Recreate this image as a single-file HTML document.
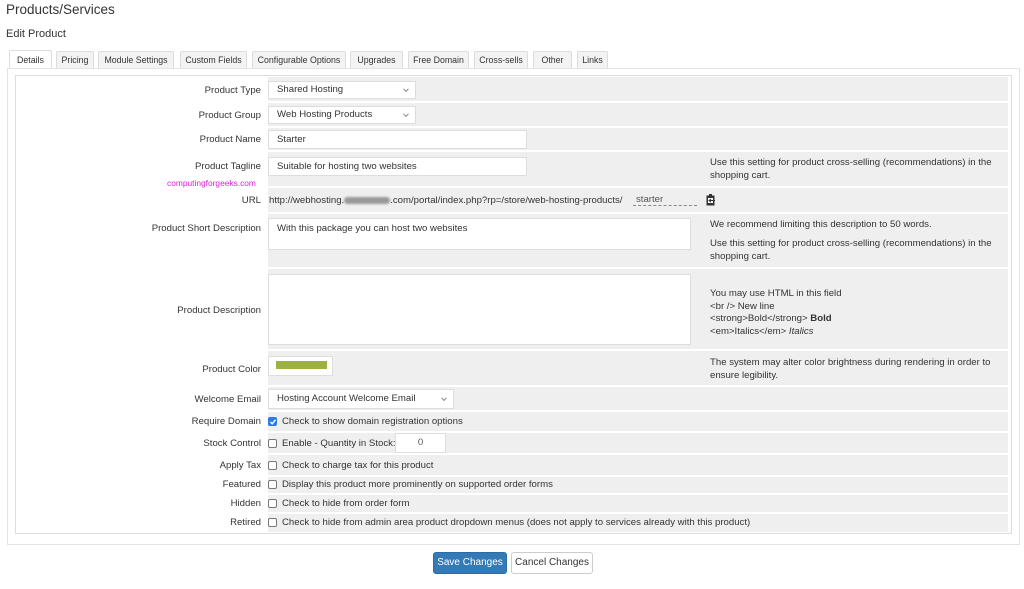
<!DOCTYPE html>
<html><head><meta charset="utf-8"><style>
*{margin:0;padding:0;box-sizing:border-box}
body{width:1024px;height:589px;background:#fff;font-family:"Liberation Sans",sans-serif;color:#333;position:relative;overflow:hidden;font-size:9.6px}
.a{position:absolute;white-space:nowrap}
h1{position:absolute;left:6px;top:2px;font-size:13.5px;font-weight:normal;color:#333}
h2{position:absolute;left:6px;top:28px;font-size:11px;font-weight:normal;color:#333}
.tab{position:absolute;top:51px;height:18px;border:1px solid #ddd;border-bottom:none;background:#f3f3f3;font-size:8.8px;line-height:17px;text-align:center;color:#333;border-radius:2px 2px 0 0;white-space:nowrap}
.tab.on{background:#fff;height:19px;top:50px;line-height:19px}
.panel{position:absolute;left:7px;top:68px;width:1013px;height:477px;border:1px solid #e4e4e4;background:#fff}
.tbl{position:absolute;left:15px;top:75px;width:997px;height:459px;border:1px solid #ddd;background:#fff}
.row{position:absolute;left:268px;width:740px;background:#efefef}
.lab{position:absolute;right:763px;font-size:9.6px;color:#333;text-align:right;white-space:nowrap}
.inp{position:absolute;background:#fff;border:1px solid #ddd;font-size:9.6px;padding-left:8px;color:#333;white-space:nowrap}
.sel::after{content:"";position:absolute;right:7px;top:50%;width:3px;height:3px;border-right:1px solid #888;border-bottom:1px solid #888;transform:translateY(-70%) rotate(45deg)}
.help{position:absolute;left:710px;font-size:9.6px;color:#333;line-height:12.5px;white-space:nowrap}
.cb{position:absolute;left:268px;width:9px;height:9px;border:1px solid #777;border-radius:2px;background:#fff}
.ct{position:absolute;left:282px;font-size:9.6px;color:#333;white-space:nowrap}
.btn{position:absolute;top:552px;height:22px;font-size:10px;line-height:20px;text-align:center;border-radius:3px;white-space:nowrap}
</style></head><body>
<h1>Products/Services</h1>
<h2>Edit Product</h2>
<div class="tab on" style="left:9px;width:43px">Details</div>
<div class="tab" style="left:56px;width:38px">Pricing</div>
<div class="tab" style="left:98px;width:76px">Module Settings</div>
<div class="tab" style="left:180px;width:67px">Custom Fields</div>
<div class="tab" style="left:252px;width:94px">Configurable Options</div>
<div class="tab" style="left:350px;width:53px">Upgrades</div>
<div class="tab" style="left:408px;width:61px">Free Domain</div>
<div class="tab" style="left:474px;width:54px">Cross-sells</div>
<div class="tab" style="left:533px;width:39px">Other</div>
<div class="tab" style="left:577px;width:31px">Links</div>
<div class="panel"></div>
<div class="tbl"></div>

<div class="row" style="top:77px;height:24px"></div>
<div class="row" style="top:103px;height:23px"></div>
<div class="row" style="top:128px;height:22px"></div>
<div class="row" style="top:152px;height:34px"></div>
<div class="row" style="top:188px;height:24px"></div>
<div class="row" style="top:214px;height:53px"></div>
<div class="row" style="top:269px;height:80px"></div>
<div class="row" style="top:351px;height:34px"></div>
<div class="row" style="top:387px;height:23px"></div>
<div class="row" style="top:412px;height:19px"></div>
<div class="row" style="top:433px;height:20px"></div>
<div class="row" style="top:455px;height:20px"></div>
<div class="row" style="top:477px;height:16px"></div>
<div class="row" style="top:495px;height:17px"></div>
<div class="row" style="top:514px;height:18px"></div>

<div class="lab" style="top:85px">Product Type</div>
<div class="inp sel" style="left:268px;top:81px;width:148px;height:18px;line-height:16px">Shared Hosting</div>
<div class="lab" style="top:110px">Product Group</div>
<div class="inp sel" style="left:268px;top:106px;width:148px;height:18px;line-height:16px">Web Hosting Products</div>
<div class="lab" style="top:134px">Product Name</div>
<div class="inp" style="left:268px;top:130px;width:259px;height:19px;line-height:17px">Starter</div>
<div class="lab" style="top:161px">Product Tagline</div>
<div class="inp" style="left:268px;top:157px;width:259px;height:19px;line-height:17px">Suitable for hosting two websites</div>
<div class="a" style="left:167px;top:178px;font-size:8.4px;color:#e020e0">computingforgeeks.com</div>
<div class="help" style="top:157px">Use this setting for product cross-selling (recommendations) in the<br>shopping cart.</div>
<div class="lab" style="top:195px">URL</div>
<div class="a" style="left:269px;top:195px;font-size:9.6px">http://webhosting.<span style="display:inline-block;width:46px;height:7px;background:#999;border-radius:4px;vertical-align:middle;filter:blur(1px)"></span>.com/portal/index.php?rp=/store/web-hosting-products/</div>
<div class="a" style="left:633px;top:194px;width:64px;border-bottom:1px dashed #888;padding-left:3px;font-size:9.6px;color:#555">starter</div>
<svg class="a" style="left:706px;top:194px" width="10" height="12" viewBox="0 0 10 12"><rect x="0.5" y="1.5" width="8" height="10" fill="#333"/><rect x="3" y="0" width="3" height="3" fill="#333"/><rect x="2" y="4" width="5" height="5" fill="#fff"/><path d="M5 5 L3 6.5 L5 8 M3 6.5 H9" stroke="#333" stroke-width="1" fill="none"/></svg>
<div class="lab" style="top:223px">Product Short Description</div>
<div class="inp" style="left:268px;top:218px;width:423px;height:32px;padding-top:4px">With this package you can host two websites</div>
<div class="help" style="top:219px">We recommend limiting this description to 50 words.</div>
<div class="help" style="top:238px">Use this setting for product cross-selling (recommendations) in the<br>shopping cart.</div>
<div class="lab" style="top:305px">Product Description</div>
<div class="inp" style="left:268px;top:274px;width:423px;height:71px"></div>
<div class="help" style="top:288px">You may use HTML in this field<br>&lt;br /&gt; New line<br>&lt;strong&gt;Bold&lt;/strong&gt; <b>Bold</b><br>&lt;em&gt;Italics&lt;/em&gt; <i>Italics</i></div>
<div class="lab" style="top:364px">Product Color</div>
<div class="inp" style="left:268px;top:356px;width:65px;height:20px"></div>
<div class="a" style="left:276px;top:361px;width:51px;height:8px;background:#9db043"></div>
<div class="help" style="top:357px">The system may alter color brightness during rendering in order to<br>ensure legibility.</div>
<div class="lab" style="top:394px">Welcome Email</div>
<div class="inp sel" style="left:268px;top:389px;width:186px;height:20px;line-height:18px">Hosting Account Welcome Email</div>
<div class="lab" style="top:416px">Require Domain</div>
<div class="cb" style="top:417px;background:#2c7be5;border-color:#2c7be5"></div>
<svg class="a" style="left:269px;top:418px" width="8" height="8" viewBox="0 0 8 8"><path d="M1.5 4 L3.2 5.8 L6.5 1.8" stroke="#fff" stroke-width="1.4" fill="none"/></svg>
<div class="ct" style="top:416px">Check to show domain registration options</div>
<div class="lab" style="top:438px">Stock Control</div>
<div class="cb" style="top:439px"></div>
<div class="ct" style="top:438px">Enable - Quantity in Stock:</div>
<div class="inp" style="left:395px;top:433px;width:51px;height:20px;line-height:18px;text-align:center;padding:0;color:#555">0</div>
<div class="lab" style="top:460px">Apply Tax</div>
<div class="cb" style="top:461px"></div>
<div class="ct" style="top:460px">Check to charge tax for this product</div>
<div class="lab" style="top:479px">Featured</div>
<div class="cb" style="top:480px"></div>
<div class="ct" style="top:479px">Display this product more prominently on supported order forms</div>
<div class="lab" style="top:498px">Hidden</div>
<div class="cb" style="top:499px"></div>
<div class="ct" style="top:498px">Check to hide from order form</div>
<div class="lab" style="top:517px">Retired</div>
<div class="cb" style="top:518px"></div>
<div class="ct" style="top:517px">Check to hide from admin area product dropdown menus (does not apply to services already with this product)</div>

<div class="btn" style="left:433px;width:74px;background:#337ab7;border:1px solid #2e6da4;color:#fff">Save Changes</div>
<div class="btn" style="left:511px;width:82px;background:#fff;border:1px solid #ccc;color:#333">Cancel Changes</div>
</body></html>
